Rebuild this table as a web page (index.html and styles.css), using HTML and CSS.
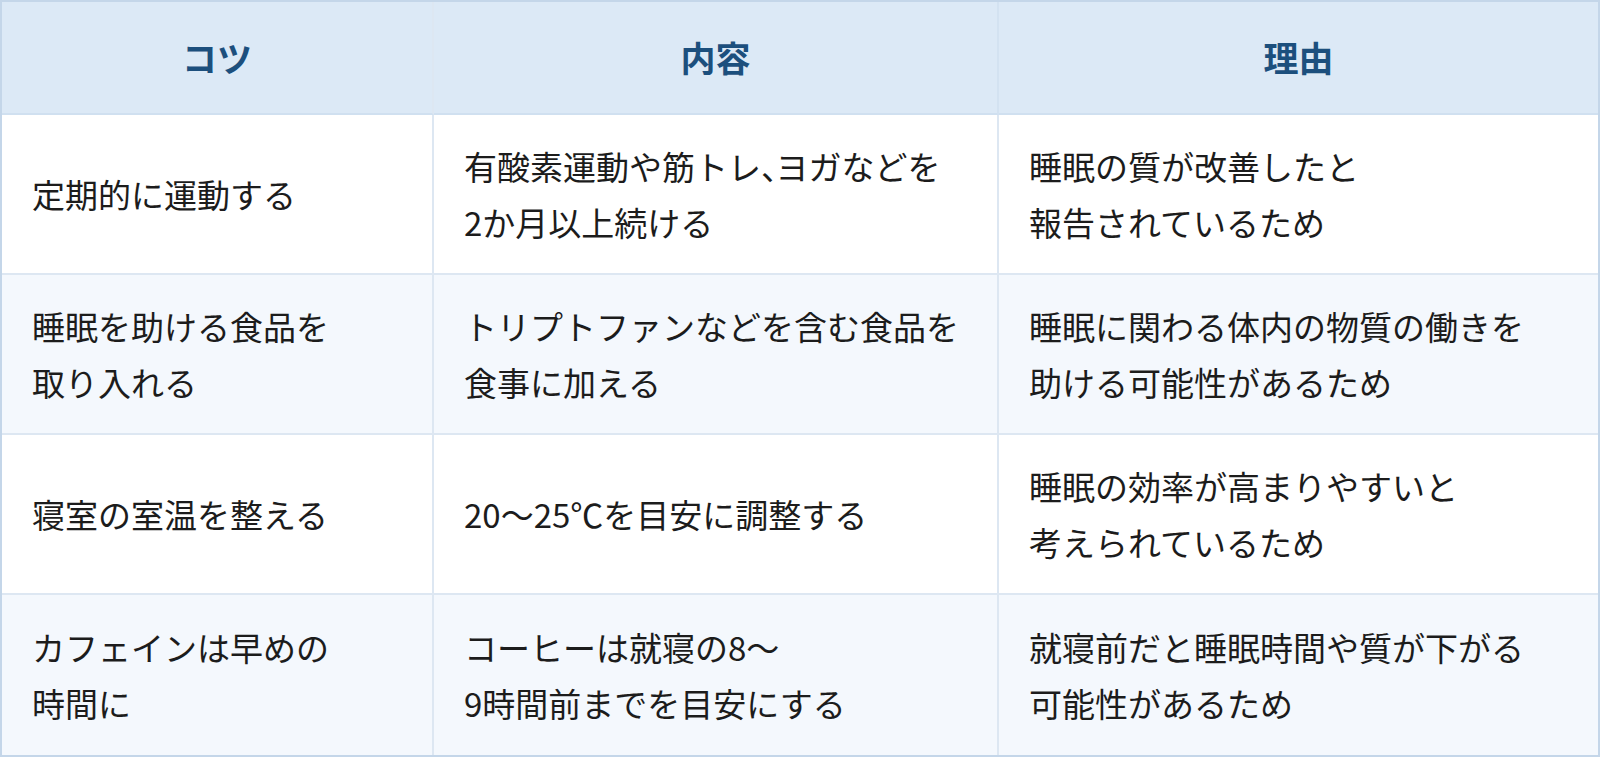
FILE: index.html
```html
<!DOCTYPE html>
<html lang="ja">
<head>
<meta charset="utf-8">
<title>睡眠のコツ</title>
<link rel="stylesheet" href="styles.css">
</head>
<body>
<div class="table" role="table">
  <div class="cell head" role="columnheader"><div class="txt">コツ</div></div>
  <div class="cell head" role="columnheader"><div class="txt">内容</div></div>
  <div class="cell head last-col" role="columnheader"><div class="txt">理由</div></div>

  <div class="cell" role="cell"><div class="txt">定期的に運動する</div></div>
  <div class="cell" role="cell"><div class="txt">有酸素運動や筋トレ<span class="punct">、</span>ヨガなどを<br>2か月以上続ける</div></div>
  <div class="cell last-col" role="cell"><div class="txt">睡眠の質が改善したと<br>報告されているため</div></div>

  <div class="cell alt" role="cell"><div class="txt">睡眠を助ける食品を<br>取り入れる</div></div>
  <div class="cell alt" role="cell"><div class="txt">トリプトファンなどを含む食品を<br>食事に加える</div></div>
  <div class="cell alt last-col" role="cell"><div class="txt">睡眠に関わる体内の物質の働きを<br>助ける可能性があるため</div></div>

  <div class="cell" role="cell"><div class="txt">寝室の室温を整える</div></div>
  <div class="cell" role="cell"><div class="txt">20～25℃を目安に調整する</div></div>
  <div class="cell last-col" role="cell"><div class="txt">睡眠の効率が高まりやすいと<br>考えられているため</div></div>

  <div class="cell alt last-row" role="cell"><div class="txt">カフェインは早めの<br>時間に</div></div>
  <div class="cell alt last-row" role="cell"><div class="txt">コーヒーは就寝の8～<br>9時間前までを目安にする</div></div>
  <div class="cell alt last-col last-row" role="cell"><div class="txt">就寝前だと睡眠時間や質が下がる<br>可能性があるため</div></div>
</div>
</body>
</html>
```

FILE: styles.css
```css
* {
  box-sizing: border-box;
}

html, body {
  margin: 0;
  padding: 0;
  background: #ffffff;
}

body {
  font-family: "Noto Sans CJK JP", "Noto Sans", sans-serif;
  color: #1c1c1c;
}

.table {
  width: 1600px;
  height: 757px;
  border: 2px solid #c4d6e9;
  display: grid;
  grid-template-columns: 432px 565px 599px;
  grid-template-rows: 113px 160px 160px 160px 160px;
}

.cell {
  border-right: 2px solid #dde7f2;
  border-bottom: 2px solid #dde7f2;
  padding: 0 30px;
  display: flex;
  align-items: center;
  font-size: 33px;
  line-height: 56px;
  background: #ffffff;
}

.txt {
  white-space: nowrap;
}

.punct {
  font-feature-settings: "halt";
  letter-spacing: -2px;
}

.cell.alt {
  background: #f4f8fd;
}

.cell.head {
  background: #dce9f6;
  border-bottom-color: #d0e0f0;
  justify-content: center;
  font-weight: 700;
  font-size: 35px;
  color: #1c4f7d;
  padding-bottom: 2px;
}

.cell.head + .cell.head {
  border-right-color: #d3e2f1;
}

.cell.last-col {
  border-right: none;
}

.cell.last-row {
  border-bottom: none;
}
```
